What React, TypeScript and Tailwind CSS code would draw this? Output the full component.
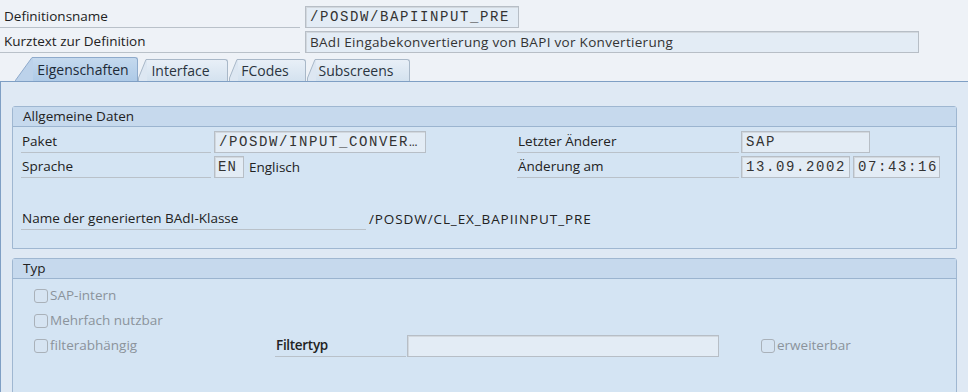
import React from 'react'

const font = { fontFamily: '"Open Sans", "Noto Sans", sans-serif' }

function Field({ value, className, mono = true }: { value: string; className: string; mono?: boolean }) {
  return (
    <div
      className={`h-[22px] flex items-center px-[4px] border border-[#b7bec6] bg-[#e3ecf5] shadow-[inset_1px_1px_0_#d2d8de] overflow-hidden whitespace-nowrap text-[#333] ${
        mono ? "font-['Liberation_Mono',monospace] text-[14px] tracking-[1.6px]" : 'text-[13.5px] tracking-[0.3px]'
      } ${className}`}
    >
      {value}
    </div>
  )
}

function Label({ text, className }: { text: string; className: string }) {
  return (
    <div className={`h-[22px] flex items-end pb-[1px] border-b border-[#b9c1c9] text-[13.5px] text-[#222] whitespace-nowrap ${className}`}>
      <span className="pl-[1px] leading-[20px]">{text}</span>
    </div>
  )
}

function Check({ label, muted = true }: { label: string; muted?: boolean }) {
  return (
    <div className="flex items-center h-[25px]">
      <div className="w-[14px] h-[14px] rounded-[3px] border border-[#a9b1b9] bg-[#d6e4f2]" />
      <span className={`ml-[2px] text-[13.5px] ${muted ? 'text-[#8b939b]' : 'text-[#222]'}`}>{label}</span>
    </div>
  )
}

function Panel({ title, className, children }: { title: string; className: string; children: React.ReactNode }) {
  return (
    <div className={`mx-[11px] w-[945px] border border-[#9fb7d1] rounded-t-[3px] bg-[#d4e4f3] ${className}`}>
      <div className="h-[20px] flex items-center px-[10px] bg-[#c6d9ed] border-b border-[#9bb4cf] text-[13.5px] text-[#222]">
        {title}
      </div>
      {children}
    </div>
  )
}

function Tab({ text, active, className }: { text: string; active?: boolean; className: string }) {
  if (active) {
    return (
      <div className={`h-[24px] flex ${className}`}>
        <svg width="18" height="24" viewBox="0 0 18 24" className="shrink-0">
          <path d="M0 24 L17 0.5 L18 0.5 L18 24 Z" fill="#bcd2ea" />
          <path d="M0 24 L17 0.5 L18 0.5" fill="none" stroke="#8eaacb" strokeWidth="1" />
        </svg>
        <div className="flex-1 flex items-center justify-center pr-[4px] border-t border-r border-[#8eaacb] rounded-tr-[3px] bg-gradient-to-b from-[#c4d9ee] to-[#aecae7] text-[14px] text-[#1d2a38]">
          {text}
        </div>
      </div>
    )
  }
  return (
    <div className={`h-[22px] flex ${className}`}>
      <svg width="9" height="22" viewBox="0 0 9 22" className="shrink-0">
        <path d="M0 22 L0 19 L8 0.5 L9 0.5 L9 22 Z" fill="#dde7f2" />
        <path d="M0.5 22 L0.5 19 L8 0.5 L9 0.5" fill="none" stroke="#a9b8c8" strokeWidth="1" />
      </svg>
      <div className="flex-1 flex items-center justify-center pr-[13px] border-t border-r border-[#a9b8c8] rounded-tr-[3px] bg-gradient-to-b from-[#e8eff7] to-[#d4e2ef] text-[14px] text-[#2a3440]">
        {text}
      </div>
    </div>
  )
}

export default function App() {
  return (
    <div className="w-[968px] h-[392px] overflow-hidden bg-[#eef2f7]" style={font}>
      <div className="pt-[6px] flex flex-col gap-[3px]">
        <div className="flex">
          <Label text="Definitionsname" className="w-[300px] pl-[3px]" />
          <Field value="/POSDW/BAPIINPUT_PRE" className="ml-[5px] w-[214px]" />
        </div>
        <div className="flex">
          <Label text="Kurztext zur Definition" className="w-[300px] pl-[3px]" />
          <Field value="BAdI Eingabekonvertierung von BAPI vor Konvertierung" mono={false} className="ml-[5px] w-[614px]" />
        </div>
      </div>

      <div className="mt-[4px] h-[24px] flex items-end pl-[15px] gap-[1px]">
        <Tab text="Eigenschaften" active className="w-[123px]" />
        <Tab text="Interface" className="w-[90px] -ml-[1px]" />
        <Tab text="FCodes" className="w-[77px]" />
        <Tab text="Subscreens" className="w-[103px]" />
      </div>

      <div className="h-[320px] border-t border-l border-[#7f9fc4] bg-[#dfe9f4] pt-[24px]">
        <Panel title="Allgemeine Daten" className="h-[143px]">
          <div className="pl-[8px] pt-[4px] flex flex-col gap-[3px]">
            <div className="flex">
              <Label text="Paket" className="w-[190px]" />
              <Field value="/POSDW/INPUT_CONVER…" className="ml-[3px] w-[212px]" />
              <Label text="Letzter Änderer" className="ml-[91px] w-[222px]" />
              <Field value="SAP" className="ml-[2px] w-[129px]" />
            </div>
            <div className="flex">
              <Label text="Sprache" className="w-[190px]" />
              <Field value="EN" className="ml-[3px] w-[30px] !tracking-[1px] !px-[3px]" />
              <span className="ml-[5px] h-[22px] flex items-center text-[13.5px] text-[#222] w-[268px]">Englisch</span>
              <Label text="Änderung am" className="w-[222px]" />
              <Field value="13.09.2002" className="ml-[2px] w-[109px]" />
              <Field value="07:43:16" className="ml-[3px] w-[87px]" />
            </div>
            <div className="flex mt-[27px]">
              <Label text="Name der generierten BAdI-Klasse" className="w-[345px]" />
              <span className="ml-[3px] h-[22px] flex items-center text-[13.5px] tracking-[0.9px] text-[#222]">/POSDW/CL_EX_BAPIINPUT_PRE</span>
            </div>
          </div>
        </Panel>

        <Panel title="Typ" className="mt-[9px] h-[150px]">
          <div className="pl-[21px] pt-[4px] flex flex-col">
            <Check label="SAP-intern" />
            <Check label="Mehrfach nutzbar" />
            <div className="flex items-center">
              <div className="w-[241px]">
                <Check label="filterabhängig" />
              </div>
              <Label text="Filtertyp" className="w-[131px] font-semibold tracking-[-0.3px]" />
              <Field value="" className="ml-[1px] w-[312px]" />
              <div className="ml-[42px]">
                <Check label="erweiterbar" />
              </div>
            </div>
          </div>
        </Panel>
      </div>
    </div>
  )
}
